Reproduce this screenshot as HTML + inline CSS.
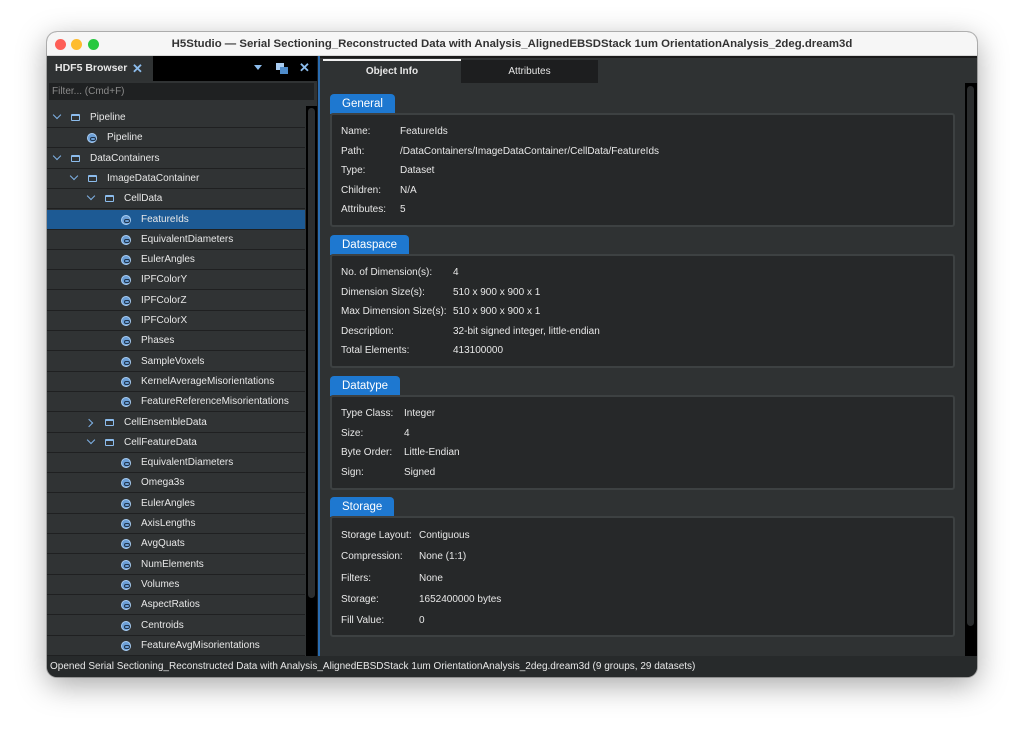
<!DOCTYPE html>
<html><head><meta charset="utf-8"><style>
*{margin:0;padding:0;box-sizing:border-box}
body{width:1024px;height:740px;background:#fff;font-family:"Liberation Sans",sans-serif;font-size:10px;color:#e8e8e8;position:relative;overflow:hidden}
.win{position:absolute;left:47px;top:32px;width:930px;height:645px;border-radius:10px;overflow:hidden;background:#2f3233;box-shadow:0 8px 30px rgba(0,0,0,.35),0 0 0 1px rgba(0,0,0,.25)}
.title{position:absolute;left:0;top:0;width:930px;height:24px;background:#f6f6f6;border-bottom:1px solid #d8d8d8;color:#333;font-weight:bold;font-size:11.4px;text-align:center;line-height:24px}
.dot{position:absolute;top:7px;width:11px;height:11px;border-radius:50%}
.a{position:absolute;white-space:nowrap}
.left{position:absolute;left:0;top:24px;width:270px;height:600px;background:#303334}
.hdr{position:absolute;left:0;top:0;width:270px;height:25px;background:#000}
.tab1{position:absolute;left:0;top:0;width:106px;height:25px;background:#2f3233;font-weight:bold;line-height:25px;padding-left:8px;font-size:10.5px}
.filter{position:absolute;left:2px;top:27px;width:265px;height:17px;background:#1f2122;color:#8a8a8a;line-height:17px;padding-left:3px}
.row{position:absolute;left:0;width:258px;height:20px;border-bottom:1px solid #1f2021;line-height:19px}
.sel{background:#1d5a94}
.chev{position:absolute;top:6px;width:6px;height:6px;border-right:1.6px solid #7fb2e6;border-bottom:1.6px solid #7fb2e6;transform:rotate(45deg)}
.chevr{transform:rotate(-45deg)}
.fold{position:absolute;top:6px;width:9px;height:7px;border:1.5px solid #8cbcec;border-top-width:2.5px;border-radius:1px}
.ds{position:absolute;top:5px;width:10px;height:10px;border-radius:50%;background:#6c9fd6;border:1px solid #a9cdf2}
.ds:after{content:"";position:absolute;left:2px;top:3px;width:4px;height:2px;border:1px solid #20344c;border-radius:2px}
.right{position:absolute;left:273px;top:24px;width:657px;height:600px;background:#2f3233}
.gtab{position:absolute;left:10px;height:20px;background:#1e78d0;color:#fff;font-size:11.5px;line-height:20px;padding:0 12px;border-radius:4px 4px 0 0}
.gbox{position:absolute;left:10px;width:625px;background:#262829;border:2px solid #3d4142;border-radius:3px}
.lbl{position:absolute;white-space:nowrap}
.status{position:absolute;left:0;top:624px;width:930px;height:21px;background:#272a2b;line-height:21px;padding-left:3px;font-size:10px}
</style></head><body>
<div class="win">
<div class="title">H5Studio — Serial Sectioning_Reconstructed Data with Analysis_AlignedEBSDStack 1um OrientationAnalysis_2deg.dream3d</div>
<div class="dot" style="left:8px;background:#fe5f57"></div>
<div class="dot" style="left:24px;background:#febc2e"></div>
<div class="dot" style="left:41px;background:#28c840"></div>

<div class="left">
 <div class="hdr">
  <div class="tab1">HDF5 Browser<span style="position:absolute;left:85px;color:#8cbcec;font-size:13px">✕</span></div>
  <div class="a" style="left:207px;top:9px;width:0;height:0;border-left:4px solid transparent;border-right:4px solid transparent;border-top:5px solid #8cbcec"></div>
  <div class="a" style="left:229px;top:7px;width:8px;height:7px;background:#a9cdf2"></div>
  <div class="a" style="left:233px;top:11px;width:8px;height:7px;background:#4f8ccb"></div>
  <div class="a" style="left:252px;top:4px;color:#8cbcec;font-size:13px;font-weight:bold">✕</div>
 </div>
 <div class="filter">Filter... (Cmd+F)</div>
 <div class="a" style="left:259px;top:50px;width:11px;height:550px;background:#000"></div>
 <div class="a" style="left:261px;top:52px;width:7px;height:490px;background:#2c2e2f;border-radius:4px"></div>
 <div style="position:absolute;left:0;top:52px">
  <div class="row" style="top:0"><i class="chev" style="left:7px;top:4px"></i><i class="fold" style="left:24px"></i><span class="a" style="left:43px">Pipeline</span></div>
  <div class="row" style="top:20.3px"><i class="ds" style="left:40px"></i><span class="a" style="left:60px">Pipeline</span></div>
  <div class="row" style="top:40.6px"><i class="chev" style="left:7px;top:4px"></i><i class="fold" style="left:24px"></i><span class="a" style="left:43px">DataContainers</span></div>
  <div class="row" style="top:60.9px"><i class="chev" style="left:24px;top:4px"></i><i class="fold" style="left:41px"></i><span class="a" style="left:60px">ImageDataContainer</span></div>
  <div class="row" style="top:81.2px"><i class="chev" style="left:41px;top:4px"></i><i class="fold" style="left:58px"></i><span class="a" style="left:77px">CellData</span></div>
  <div class="row sel" style="top:101.5px"><i class="ds" style="left:74px"></i><span class="a" style="left:94px">FeatureIds</span></div>
  <div class="row" style="top:121.8px"><i class="ds" style="left:74px"></i><span class="a" style="left:94px">EquivalentDiameters</span></div>
  <div class="row" style="top:142.1px"><i class="ds" style="left:74px"></i><span class="a" style="left:94px">EulerAngles</span></div>
  <div class="row" style="top:162.4px"><i class="ds" style="left:74px"></i><span class="a" style="left:94px">IPFColorY</span></div>
  <div class="row" style="top:182.7px"><i class="ds" style="left:74px"></i><span class="a" style="left:94px">IPFColorZ</span></div>
  <div class="row" style="top:203px"><i class="ds" style="left:74px"></i><span class="a" style="left:94px">IPFColorX</span></div>
  <div class="row" style="top:223.3px"><i class="ds" style="left:74px"></i><span class="a" style="left:94px">Phases</span></div>
  <div class="row" style="top:243.6px"><i class="ds" style="left:74px"></i><span class="a" style="left:94px">SampleVoxels</span></div>
  <div class="row" style="top:263.9px"><i class="ds" style="left:74px"></i><span class="a" style="left:94px">KernelAverageMisorientations</span></div>
  <div class="row" style="top:284.2px"><i class="ds" style="left:74px"></i><span class="a" style="left:94px">FeatureReferenceMisorientations</span></div>
  <div class="row" style="top:304.5px"><i class="chev chevr" style="left:39px;top:7px"></i><i class="fold" style="left:58px"></i><span class="a" style="left:77px">CellEnsembleData</span></div>
  <div class="row" style="top:324.8px"><i class="chev" style="left:41px;top:4px"></i><i class="fold" style="left:58px"></i><span class="a" style="left:77px">CellFeatureData</span></div>
  <div class="row" style="top:345.1px"><i class="ds" style="left:74px"></i><span class="a" style="left:94px">EquivalentDiameters</span></div>
  <div class="row" style="top:365.4px"><i class="ds" style="left:74px"></i><span class="a" style="left:94px">Omega3s</span></div>
  <div class="row" style="top:385.7px"><i class="ds" style="left:74px"></i><span class="a" style="left:94px">EulerAngles</span></div>
  <div class="row" style="top:406px"><i class="ds" style="left:74px"></i><span class="a" style="left:94px">AxisLengths</span></div>
  <div class="row" style="top:426.3px"><i class="ds" style="left:74px"></i><span class="a" style="left:94px">AvgQuats</span></div>
  <div class="row" style="top:446.6px"><i class="ds" style="left:74px"></i><span class="a" style="left:94px">NumElements</span></div>
  <div class="row" style="top:466.9px"><i class="ds" style="left:74px"></i><span class="a" style="left:94px">Volumes</span></div>
  <div class="row" style="top:487.2px"><i class="ds" style="left:74px"></i><span class="a" style="left:94px">AspectRatios</span></div>
  <div class="row" style="top:507.5px"><i class="ds" style="left:74px"></i><span class="a" style="left:94px">Centroids</span></div>
  <div class="row" style="top:527.8px"><i class="ds" style="left:74px"></i><span class="a" style="left:94px">FeatureAvgMisorientations</span></div>
 </div>
</div>
<div class="a" style="left:270px;top:24px;width:3px;height:600px;background:#1c1d1e;border-right:2px solid #2a6cb0"></div>

<div class="right">
 <div class="a" style="left:0;top:0;width:657px;height:2px;background:#1a1a1a"></div>
 <div class="a" style="left:3px;top:3px;width:138px;height:24px;border-top:2px solid #f0f0f0;background:#2f3233;text-align:center;line-height:22px;font-weight:bold">Object Info</div>
 <div class="a" style="left:141px;top:4px;width:137px;height:23px;background:#1d1e1f;text-align:center;line-height:23px">Attributes</div>
 <div class="a" style="left:645px;top:27px;width:12px;height:573px;background:#000"></div>
 <div class="a" style="left:647px;top:30px;width:7px;height:540px;background:#2a2c2d;border-radius:4px"></div>

 <div class="gtab" style="top:38px">General</div>
 <div class="gbox" style="top:57px;height:114px">
  <span class="lbl" style="left:9px;top:11px">Name:</span><span class="lbl" style="left:68px;top:11px">FeatureIds</span>
  <span class="lbl" style="left:9px;top:30.5px">Path:</span><span class="lbl" style="left:68px;top:30.5px">/DataContainers/ImageDataContainer/CellData/FeatureIds</span>
  <span class="lbl" style="left:9px;top:50px">Type:</span><span class="lbl" style="left:68px;top:50px">Dataset</span>
  <span class="lbl" style="left:9px;top:69.5px">Children:</span><span class="lbl" style="left:68px;top:69.5px">N/A</span>
  <span class="lbl" style="left:9px;top:89px">Attributes:</span><span class="lbl" style="left:68px;top:89px">5</span>
 </div>

 <div class="gtab" style="top:179px">Dataspace</div>
 <div class="gbox" style="top:198px;height:114px">
  <span class="lbl" style="left:9px;top:11px">No. of Dimension(s):</span><span class="lbl" style="left:121px;top:11px">4</span>
  <span class="lbl" style="left:9px;top:30.5px">Dimension Size(s):</span><span class="lbl" style="left:121px;top:30.5px">510 x 900 x 900 x 1</span>
  <span class="lbl" style="left:9px;top:50px">Max Dimension Size(s):</span><span class="lbl" style="left:121px;top:50px">510 x 900 x 900 x 1</span>
  <span class="lbl" style="left:9px;top:69.5px">Description:</span><span class="lbl" style="left:121px;top:69.5px">32-bit signed integer, little-endian</span>
  <span class="lbl" style="left:9px;top:89px">Total Elements:</span><span class="lbl" style="left:121px;top:89px">413100000</span>
 </div>

 <div class="gtab" style="top:320px">Datatype</div>
 <div class="gbox" style="top:339px;height:95px">
  <span class="lbl" style="left:9px;top:11px">Type Class:</span><span class="lbl" style="left:72px;top:11px">Integer</span>
  <span class="lbl" style="left:9px;top:30.5px">Size:</span><span class="lbl" style="left:72px;top:30.5px">4</span>
  <span class="lbl" style="left:9px;top:50px">Byte Order:</span><span class="lbl" style="left:72px;top:50px">Little-Endian</span>
  <span class="lbl" style="left:9px;top:69.5px">Sign:</span><span class="lbl" style="left:72px;top:69.5px">Signed</span>
 </div>

 <div class="gtab" style="top:441px">Storage</div>
 <div class="gbox" style="top:460px;height:121px">
  <span class="lbl" style="left:9px;top:12px">Storage Layout:</span><span class="lbl" style="left:87px;top:12px">Contiguous</span>
  <span class="lbl" style="left:9px;top:33px">Compression:</span><span class="lbl" style="left:87px;top:33px">None (1:1)</span>
  <span class="lbl" style="left:9px;top:54.5px">Filters:</span><span class="lbl" style="left:87px;top:54.5px">None</span>
  <span class="lbl" style="left:9px;top:75.5px">Storage:</span><span class="lbl" style="left:87px;top:75.5px">1652400000 bytes</span>
  <span class="lbl" style="left:9px;top:96.5px">Fill Value:</span><span class="lbl" style="left:87px;top:96.5px">0</span>
 </div>
</div>

<div class="status">Opened Serial Sectioning_Reconstructed Data with Analysis_AlignedEBSDStack 1um OrientationAnalysis_2deg.dream3d (9 groups, 29 datasets)</div>
</div>
</body></html>
